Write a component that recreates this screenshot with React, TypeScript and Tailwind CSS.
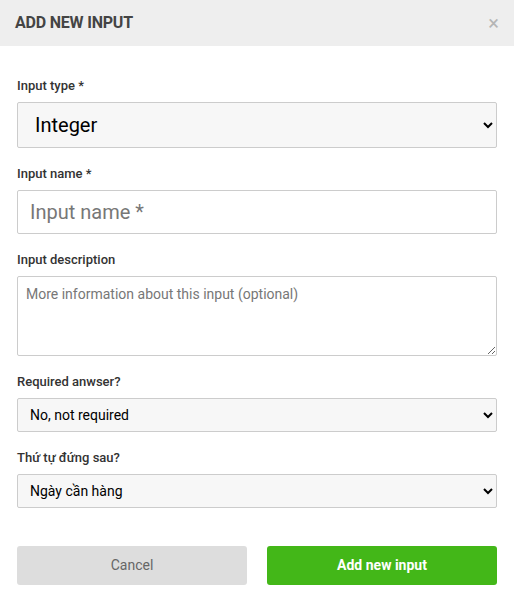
import React from "react";

export default function App() {
  const font = { fontFamily: "Roboto, 'Noto Sans', sans-serif" };
  return (
    <div className="w-[514px] h-[612px] bg-white" style={font}>
      <div className="h-[46px] bg-[#eeeeee] flex items-center justify-between pl-[15px] pr-[15px]">
        <h2 className="text-[16px] font-bold text-[#444444] tracking-[-0.2px]">ADD NEW INPUT</h2>
        <span className="text-[#b5b5b5] text-[20px] leading-none">×</span>
      </div>
      <div className="px-[17px] pt-[31px] flex flex-col">
        <label className="text-[13px] font-medium text-[#333333] leading-[18px]">Input type *</label>
        <select className="mt-[7px] h-[46px] w-[480px] bg-[#f7f7f7] border border-[#cccccc] rounded-[2px] text-[20px] text-black pl-[13px] pr-[2px]" style={font} defaultValue="Integer">
          <option>Integer</option>
        </select>
        <label className="mt-[17px] text-[13px] font-medium text-[#333333] leading-[18px]">Input name *</label>
        <input className="mt-[7px] h-[44px] w-[480px] bg-white border border-[#cccccc] rounded-[2px] text-[20px] px-[12px] placeholder:text-[#777777]" placeholder="Input name *" style={font} />
        <label className="mt-[17px] text-[13px] font-medium text-[#333333] leading-[18px]">Input description</label>
        <textarea className="mt-[7px] h-[80px] w-[480px] bg-white border border-[#cccccc] rounded-[2px] text-[14px] px-[8px] py-[7px] placeholder:text-[#777777]" placeholder="More information about this input (optional)" style={font} />
        <label className="mt-[17px] text-[13px] font-medium text-[#333333] leading-[18px]">Required anwser?</label>
        <select className="mt-[7px] h-[34px] w-[480px] bg-[#f7f7f7] border border-[#cccccc] rounded-[2px] text-[14px] text-black pl-[8px] pr-[2px]" style={font} defaultValue="No, not required">
          <option>No, not required</option>
        </select>
        <label className="mt-[17px] text-[13px] font-medium text-[#333333] leading-[18px]">Thứ tự đứng sau?</label>
        <select className="mt-[7px] h-[34px] w-[480px] bg-[#f7f7f7] border border-[#cccccc] rounded-[2px] text-[14px] text-black pl-[8px] pr-[2px]" style={font} defaultValue="Ngày cần hàng">
          <option>Ngày cần hàng</option>
        </select>
        <div className="mt-[38px] flex gap-[20px]">
          <button className="w-[230px] h-[39px] bg-[#dddddd] rounded-[3px] text-[14px] text-[#666666]" style={font}>Cancel</button>
          <button className="w-[230px] h-[39px] bg-[#43b718] rounded-[3px] text-[14px] font-bold text-white" style={font}>Add new input</button>
        </div>
      </div>
    </div>
  );
}
